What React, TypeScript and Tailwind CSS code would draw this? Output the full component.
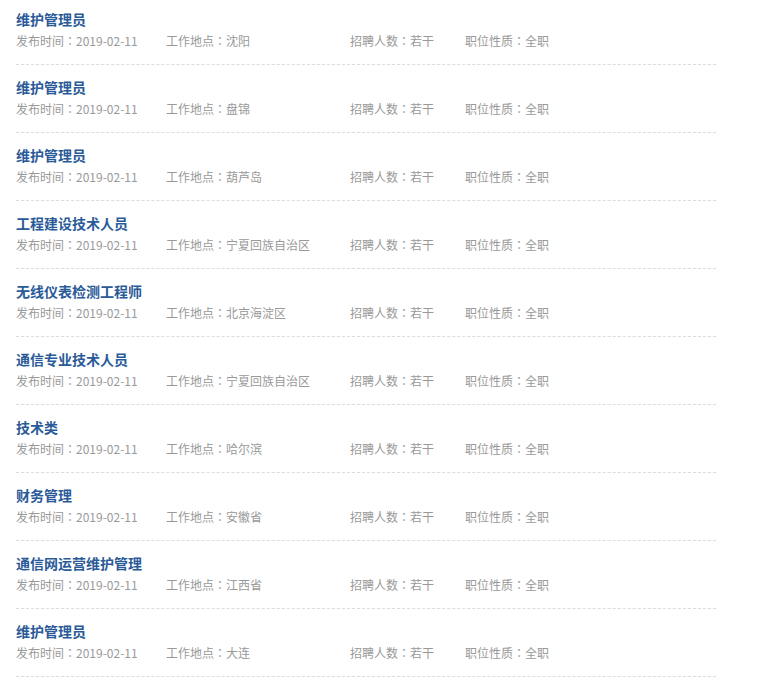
const jobs = [
  { title: '维护管理员', place: '沈阳' },
  { title: '维护管理员', place: '盘锦' },
  { title: '维护管理员', place: '葫芦岛' },
  { title: '工程建设技术人员', place: '宁夏回族自治区' },
  { title: '无线仪表检测工程师', place: '北京海淀区' },
  { title: '通信专业技术人员', place: '宁夏回族自治区' },
  { title: '技术类', place: '哈尔滨' },
  { title: '财务管理', place: '安徽省' },
  { title: '通信网运营维护管理', place: '江西省' },
  { title: '维护管理员', place: '大连' },
];

// 冒号居中 (TC 字体的全角标点居中)
function Field({ label, value, className }: { label: string; value: string; className?: string }) {
  return (
    <span className={className}>
      {label}
      <span className="font-['Noto_Sans_CJK_TC',sans-serif]">：</span>
      {value}
    </span>
  );
}

export default function App() {
  return (
    <div className="min-h-screen bg-white font-['Noto_Sans_CJK_SC',sans-serif]">
      <ul className="-mt-[3px] ml-4 w-[700px]">
        {jobs.map((job, i) => (
          <li key={i} className="border-b border-dashed border-[#dcdcdc] pt-[13px] pb-[11px]">
            <a href="#" className="block text-[14px] leading-[18px] font-bold text-[#2a5a98]">
              {job.title}
            </a>
            <div className="mt-px flex text-[12px] leading-6 text-[#999]">
              <Field className="w-[150px]" label="发布时间" value="2019-02-11" />
              <Field className="w-[184px]" label="工作地点" value={job.place} />
              <Field className="w-[115px]" label="招聘人数" value="若干" />
              <Field label="职位性质" value="全职" />
            </div>
          </li>
        ))}
      </ul>
    </div>
  );
}
